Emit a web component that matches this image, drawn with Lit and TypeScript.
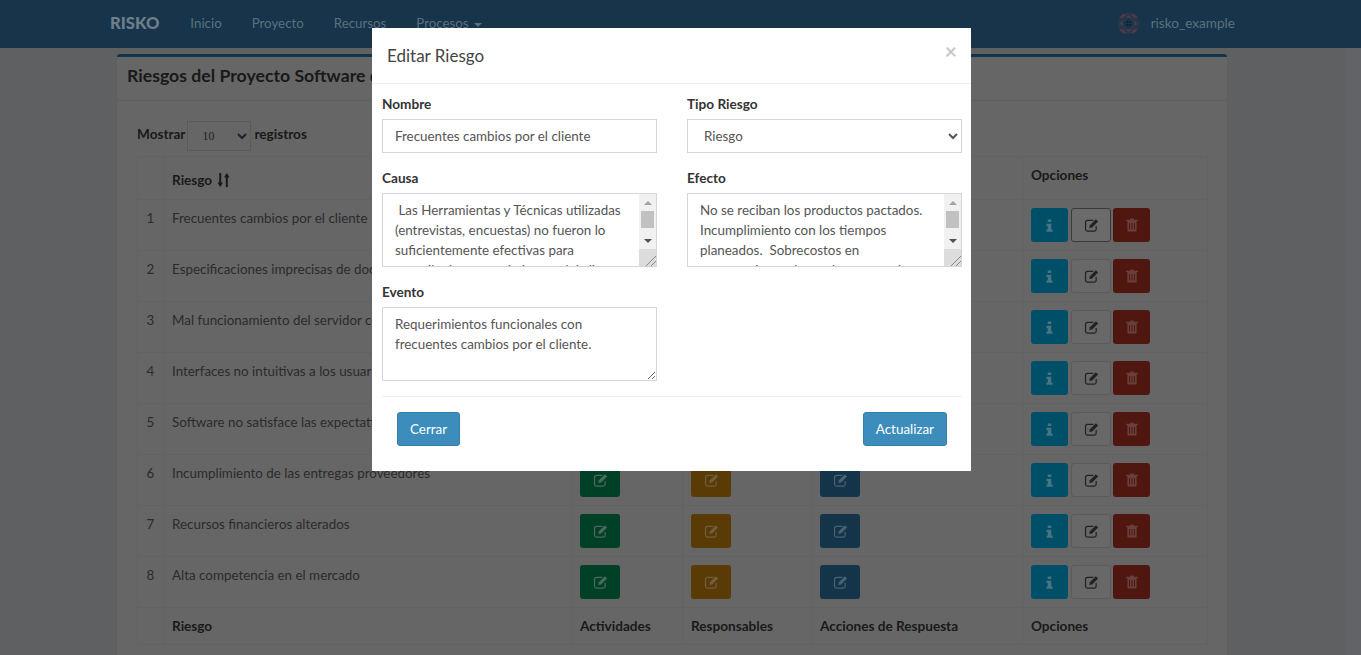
import { LitElement, css, html, svg } from "lit";
import { customElement } from "lit/decorators.js";

const editIcon = svg`<svg class="ico" width="15" height="14" viewBox="0 0 16 15">
  <path d="M10 2.600H3.600a2 2 0 0 0-2 2v7.400a2 2 0 0 0 2 2H11a2 2 0 0 0 2-2V8.500" fill="none" stroke="currentColor" stroke-width="1.300"/>
  <path d="M5.600 10.800l.7-3L12.700 1.400l2.400 2.400-6.400 6.400z" fill="currentColor"/></svg>`;

const infoIcon = svg`<svg class="ico" width="7" height="13" viewBox="0 0 8 14">
  <path d="M2 0h4v3H2zM.5 5H6v6.500h1.500V14h-7v-2.500H2V7.500H.5z" fill="currentColor"/></svg>`;

const trashIcon = svg`<svg class="ico" width="12" height="14" viewBox="0 0 12 14">
  <path d="M4 1.800 4.600.4h2.800L8 1.800h4V3H0V1.800z" fill="currentColor"/>
  <path d="M1.400 3v9.400a1.200 1.200 0 0 0 1.200 1.200h6.800a1.200 1.200 0 0 0 1.200-1.200V3zM3 5h1v6.400H3zm2.500 0h1v6.400h-1zM8 5h1v6.400H8z" fill="currentColor" fill-rule="evenodd"/></svg>`;

const sortIcon = svg`<svg class="sort" width="13" height="14" viewBox="0 0 13 14">
  <path d="M2.200 0h2v9.500H6L3.200 14 .4 9.500h1.800zM8.800 14h2V4.500h1.800L9.800 0 7 4.500h1.800z" fill="currentColor"/></svg>`;

const avatar = svg`<svg class="avatar" width="23" height="23" viewBox="0 0 24 24">
  <circle cx="12" cy="12" r="11.500" fill="#243848"/>
  <path d="M2 6l4-4h4L6 6zM22 6l-4-4h-4l4 4zM2 18l4 4h4l-4-4zM22 18l-4 4h-4l4-4z" fill="#5a344c"/>
  <path d="M12 3l3 3h-6zM12 21l-3-3h6zM3 12l3-3v6zM21 12l-3 3V9z" fill="#463e52"/>
  <path d="M12 6l6 6-6 6-6-6z" fill="#17344a"/>
  <path d="M9.500 9.500h2v2h-2zM12.500 9.500h2v2h-2zM9.500 12.500h2v2h-2zM12.500 12.500h2v2h-2z" fill="#0f2230"/></svg>`;

const riesgos = [
  "Frecuentes cambios por el cliente",
  "Especificaciones imprecisas de documentos",
  "Mal funcionamiento del servidor con",
  "Interfaces no intuitivas a los usuarios",
  "Software no satisface las expectativas",
  "Incumplimiento de las entregas proveedores",
  "Recursos financieros alterados",
  "Alta competencia en el mercado",
];

@customElement("app-root")
export class AppRoot extends LitElement {
  static styles = css`
    :host {
      display: block;
      position: relative;
      height: 655px;
      overflow: hidden;
      background: #5e6062;
      font-family: "Lato", "Liberation Sans", sans-serif;
      font-size: 13.4px;
      line-height: 20px;
      color: #2b2b2b;
    }
    * { box-sizing: border-box; }

    .navbar {
      display: flex;
      align-items: center;
      height: 48px;
      padding: 0 0 2px 110px;
      background: #17344a;
      color: #5a7180;
      font-size: 13.3px;
    }
    .brand { font-size: 16.6px; font-weight: 900; color: #6c7f8c; margin-right: 16px; }
    .navbar a { padding: 0 15px; }
    .caret {
      display: inline-block;
      margin-left: 2px;
      vertical-align: middle;
      border-top: 4px solid currentColor;
      border-left: 4px solid transparent;
      border-right: 4px solid transparent;
    }
    .user { display: flex; align-items: center; gap: 11px; margin-left: auto; margin-right: 126px; font-size: 13.6px; }

    .page { display: flex; height: 607px; }
    .content { flex: 1; padding: 6px 0 0 117px; min-width: 0; }
    .scrollstrip { width: 15px; background: #626366; }

    .box {
      width: 1110px;
      height: 640px;
      background: #666666;
      border-top: 3px solid #143449;
      border-radius: 3px;
    }
    .box-header {
      height: 44px;
      padding: 9px 10px;
      border-bottom: 1px solid #5f5f5f;
      font-size: 17.7px;
      line-height: 20px;
      font-weight: 700;
      color: #191919;
    }
    .box-body { padding: 20px; }
    .length {
      display: flex;
      align-items: center;
      gap: 3px;
      height: 30px;
      margin-bottom: 5px;
      font-size: 13.6px;
      font-weight: 700;
      color: #191919;
    }
    .length span { margin-bottom: 4px; }
    .length select {
      width: 64px;
      height: 30px;
      margin-left: -1px;
      padding: 0 10px;
      background: #666666;
      border: 1px solid #5a5a5a;
      color: #222;
      font: 12px "Liberation Serif", serif;
    }

    table { width: 1070px; border-collapse: collapse; table-layout: fixed; }
    th, td {
      padding: 8px;
      text-align: left;
      vertical-align: top;
      border: 1px solid #626262;
    }
    th { color: #191919; font-size: 13.6px; font-weight: 700; }
    thead th { height: 43px; }
    th.sortable { vertical-align: bottom; padding-bottom: 9px; }
    .sort { margin-left: 2px; vertical-align: -2px; }
    td.num { text-align: center; }

    .btn-set { display: flex; }
    .btn {
      display: flex;
      align-items: center;
      justify-content: center;
      width: 40px;
      height: 34px;
      border-radius: 3px;
      border: 1px solid transparent;
    }
    .green { background: #004026; color: #4a6a5b; }
    .orange { background: #5a3b05; color: #6f5e42; }
    .blue { background: #143449; color: #4a6272; }
    .info { width: 37px; background: #004f68; color: #4a7482; margin-right: 3px; }
    .edit { background: #686868; border-color: #5b5b5b; color: #222; margin-right: 2px; }
    .edit.active { border-color: #3a3a3a; background: #6b6b6b; }
    .trash { width: 37px; background: #501711; color: #683f3a; }

    .modal {
      position: absolute;
      left: 372px;
      top: 28px;
      width: 599px;
      height: 443px;
      background: #fff;
      color: #333;
    }
    .modal-header {
      display: flex;
      justify-content: space-between;
      height: 56px;
      padding: 15px;
      border-bottom: 1px solid #f0f0f0;
    }
    .modal-title { font-size: 17px; line-height: 26px; color: #444; }
    .close { font-size: 21px; font-weight: 700; line-height: 16px; color: #c8c8c8; margin-right: -1px; }
    .modal-body {
      display: grid;
      grid-template-columns: 275px 275px;
      column-gap: 30px;
      row-gap: 15px;
      padding: 10px 10px 15px;
    }
    .field label { display: block; margin-bottom: 5px; font-size: 13.6px; font-weight: 700; color: #333; }
    input, textarea, .field select {
      display: block;
      width: 100%;
      padding: 6px 12px;
      border: 1px solid #d2d6de;
      border-radius: 0;
      background: #fff;
      color: #555;
      font: inherit;
      outline: none;
    }
    input, .field select { height: 34px; }
    textarea { height: 74px; resize: both; overflow: hidden; }

    .scroll-wrap { position: relative; height: 74px; }
    .scroll-wrap textarea { padding-right: 29px; resize: none; }
    .scrollbar {
      position: absolute;
      top: 1px;
      right: 1px;
      bottom: 1px;
      width: 17px;
      display: flex;
      flex-direction: column;
      background: #f1f1f1;
    }
    .arrow { height: 17px; display: flex; align-items: center; justify-content: center; }
    .arrow i { display: block; border-left: 4px solid transparent; border-right: 4px solid transparent; }
    .arrow.up i { border-bottom: 4px solid #a3a3a3; }
    .arrow.down { margin-top: 4px; }
    .arrow.down i { border-top: 4px solid #505050; }
    .thumb { height: 17px; margin: 0 2px; background: #c1c1c1; }
    .grip {
      height: 17px;
      background-color: #dcdcdc;
      background-image: linear-gradient(135deg, transparent 68%, #888 68%, #888 72%, transparent 72%, transparent 84%, #888 84%, #888 88%, transparent 88%);
    }

    .modal-footer {
      display: flex;
      justify-content: space-between;
      margin: 0 9px 0 10px;
      padding: 15px;
      border-top: 1px solid #f0f0f0;
    }
    .modal-footer button {
      height: 34px;
      padding: 0 12px;
      background: #3c8dbc;
      border: 1px solid #367fa9;
      border-radius: 3px;
      color: #fff;
      font: inherit;
    }
  `;

  private renderRow(texto: string, i: number) {
    return html`<tr>
      <td class="num">${i + 1}</td>
      <td>${texto}</td>
      <td><div class="btn green">${editIcon}</div></td>
      <td><div class="btn orange">${editIcon}</div></td>
      <td><div class="btn blue">${editIcon}</div></td>
      <td>
        <div class="btn-set">
          <div class="btn info">${infoIcon}</div>
          <div class="btn edit ${i === 0 ? "active" : ""}">${editIcon}</div>
          <div class="btn trash">${trashIcon}</div>
        </div>
      </td>
    </tr>`;
  }

  private renderScrollArea(texto: string) {
    return html`<div class="scroll-wrap">
      <textarea .value=${texto}></textarea>
      <div class="scrollbar">
        <div class="arrow up"><i></i></div>
        <div class="thumb"></div>
        <div class="arrow down"><i></i></div>
        <div class="grip"></div>
      </div>
    </div>`;
  }

  render() {
    return html`
      <header class="navbar">
        <span class="brand">RISKO</span>
        <a>Inicio</a><a>Proyecto</a><a>Recursos</a><a>Procesos <span class="caret"></span></a>
        <div class="user">${avatar}<span>risko_example</span></div>
      </header>
      <div class="page">
        <div class="content">
          <section class="box">
            <div class="box-header">Riesgos del Proyecto Software de Gestión</div>
            <div class="box-body">
              <div class="length">
                <span>Mostrar</span>
                <select><option>10</option></select>
                <span>registros</span>
              </div>
              <table>
                <colgroup>
                  <col style="width:26px" /><col style="width:408px" /><col style="width:111px" />
                  <col style="width:129px" /><col style="width:211px" /><col style="width:185px" />
                </colgroup>
                <thead>
                  <tr>
                    <th></th>
                    <th class="sortable">Riesgo ${sortIcon}</th>
                    <th>Actividades</th>
                    <th>Responsables</th>
                    <th>Acciones de Respuesta</th>
                    <th>Opciones</th>
                  </tr>
                </thead>
                <tbody>${riesgos.map((r, i) => this.renderRow(r, i))}</tbody>
                <tfoot>
                  <tr>
                    <th></th>
                    <th>Riesgo</th>
                    <th>Actividades</th>
                    <th>Responsables</th>
                    <th>Acciones de Respuesta</th>
                    <th>Opciones</th>
                  </tr>
                </tfoot>
              </table>
            </div>
          </section>
        </div>
        <div class="scrollstrip"></div>
      </div>

      <div class="modal">
        <div class="modal-header">
          <span class="modal-title">Editar Riesgo</span>
          <span class="close">×</span>
        </div>
        <div class="modal-body">
          <div class="field">
            <label>Nombre</label>
            <input .value=${"Frecuentes cambios por el cliente"} />
          </div>
          <div class="field">
            <label>Tipo Riesgo</label>
            <select><option>Riesgo</option></select>
          </div>
          <div class="field">
            <label>Causa</label>
            ${this.renderScrollArea(" Las Herramientas y Técnicas utilizadas (entrevistas, encuestas) no fueron lo suficientemente efectivas para recopilar los requerimientos del cliente y del proyecto en curso.")}
          </div>
          <div class="field">
            <label>Efecto</label>
            ${this.renderScrollArea("No se reciban los productos pactados. Incumplimiento con los tiempos planeados.  Sobrecostos en contrataciones de productos y en la gestión general del proyecto.")}
          </div>
          <div class="field">
            <label>Evento</label>
            <textarea .value=${"Requerimientos funcionales con frecuentes cambios por el cliente."}></textarea>
          </div>
        </div>
        <div class="modal-footer">
          <button>Cerrar</button>
          <button>Actualizar</button>
        </div>
      </div>
    `;
  }
}
